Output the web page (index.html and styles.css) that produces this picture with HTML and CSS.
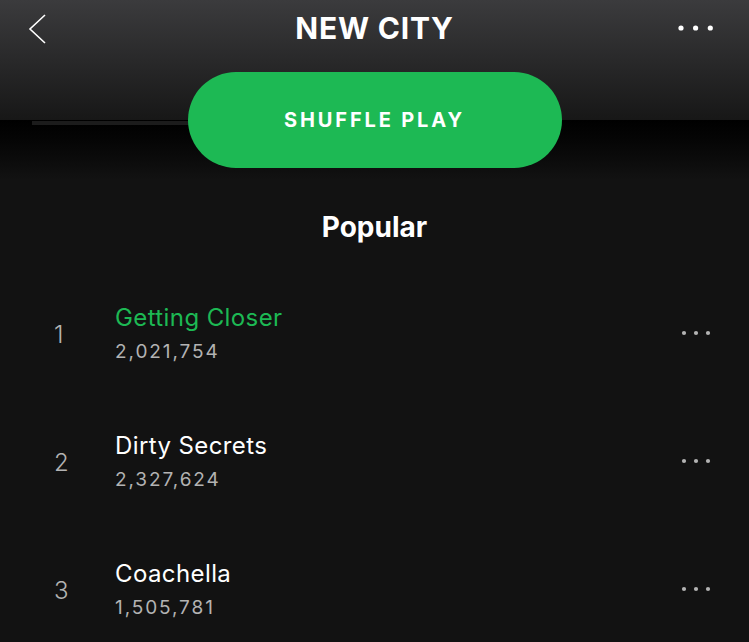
FILE: index.html
```html
<!DOCTYPE html>
<html>
<head>
<meta charset="utf-8">
<link rel="stylesheet" href="styles.css">
</head>
<body>
<header class="topbar">
  <svg class="back" width="20" height="32" viewBox="0 0 20 32"><path d="M17 1 L2 15 L17 29" fill="none" stroke="#fff" stroke-width="1.6"/></svg>
  <h1 class="title">NEW CITY</h1>
  <svg class="more" width="36" height="8" viewBox="0 0 36 8"><circle cx="3" cy="4" r="2.6" fill="#fff"/><circle cx="17.6" cy="4" r="2.6" fill="#fff"/><circle cx="32.3" cy="4" r="2.6" fill="#fff"/></svg>
</header>
<main class="content">
  <div class="shuffle-wrap">
    <div class="track-line"></div>
    <button class="shuffle">SHUFFLE PLAY</button>
  </div>
  <h2 class="section-title">Popular</h2>
  <ul class="tracks">
    <li class="track">
      <span class="num">1</span>
      <div class="info"><div class="name playing">Getting Closer</div><div class="plays">2,021,754</div></div>
      <svg class="row-more" width="30" height="6" viewBox="0 0 30 6"><circle cx="3" cy="3" r="2.1" fill="#b3b3b3"/><circle cx="15" cy="3" r="2.1" fill="#b3b3b3"/><circle cx="27" cy="3" r="2.1" fill="#b3b3b3"/></svg>
    </li>
    <li class="track">
      <span class="num">2</span>
      <div class="info"><div class="name">Dirty Secrets</div><div class="plays">2,327,624</div></div>
      <svg class="row-more" width="30" height="6" viewBox="0 0 30 6"><circle cx="3" cy="3" r="2.1" fill="#b3b3b3"/><circle cx="15" cy="3" r="2.1" fill="#b3b3b3"/><circle cx="27" cy="3" r="2.1" fill="#b3b3b3"/></svg>
    </li>
    <li class="track">
      <span class="num">3</span>
      <div class="info"><div class="name">Coachella</div><div class="plays">1,505,781</div></div>
      <svg class="row-more" width="30" height="6" viewBox="0 0 30 6"><circle cx="3" cy="3" r="2.1" fill="#b3b3b3"/><circle cx="15" cy="3" r="2.1" fill="#b3b3b3"/><circle cx="27" cy="3" r="2.1" fill="#b3b3b3"/></svg>
    </li>
  </ul>
</main>
</body>
</html>
```
FILE: styles.css
```css
* { box-sizing: border-box; }
html, body { margin: 0; padding: 0; }
body {
  background: #121212;
  font-family: Inter, "Noto Sans", sans-serif;
  color: #fff;
  width: 749px;
  height: 642px;
  overflow: hidden;
}
.topbar {
  height: 120px;
  background: linear-gradient(#3b3b3d, #171717);
  display: grid;
  grid-template-columns: 1fr auto 1fr;
  align-items: start;
  padding: 13px 35px 0 35px;
}
.back { display: block; margin-top: 1px; margin-left: -7px; justify-self: start; }
.title {
  margin: 0;
  text-align: center;
  font-size: 30px;
  line-height: 30px;
  font-weight: 700;
  letter-spacing: 0.8px;
}
.more { display: block; margin-top: 11px; justify-self: end; }
.content {
  background: linear-gradient(#000 0px, #050505 20px, #121212 60px);
}
.shuffle-wrap {
  display: flex;
  flex-direction: column;
  align-items: center;
  height: 48px;
}
.track-line {
  align-self: flex-start;
  margin-left: 32px;
  width: 340px;
  height: 4px;
  background: #1c1c1c;
  margin-top: 1px;
}
.shuffle {
  margin-top: -53px;
  width: 374px;
  height: 96px;
  border: none;
  border-radius: 48px;
  background: #1db954;
  color: #fff;
  font-family: Inter, "Noto Sans", sans-serif;
  font-weight: 700;
  font-size: 20px;
  letter-spacing: 2.85px;
  padding: 0;
}
.section-title {
  margin: 0;
  padding-top: 41px;
  text-align: center;
  font-size: 28px;
  line-height: 36px;
  font-weight: 700;
}
.tracks {
  list-style: none;
  margin: 0;
  padding: 24px 0 0;
}
.track {
  height: 128px;
  display: flex;
  align-items: center;
  padding: 0 38px 0 54px;
}
.num {
  width: 61px;
  font-size: 24px;
  color: #b3b3b3;
  font-weight: 300;
  padding-top: 2px;
}
.info { flex: 1; padding-top: 2px; }
.name {
  font-size: 24px;
  line-height: 30px;
  letter-spacing: 0.4px;
  color: #fff;
}
.name.playing { color: #1db954; }
.plays {
  font-size: 19px;
  line-height: 26px;
  margin-top: 6px;
  color: #b3b3b3;
  letter-spacing: 1.9px;
}
.row-more { display: block; }
```
